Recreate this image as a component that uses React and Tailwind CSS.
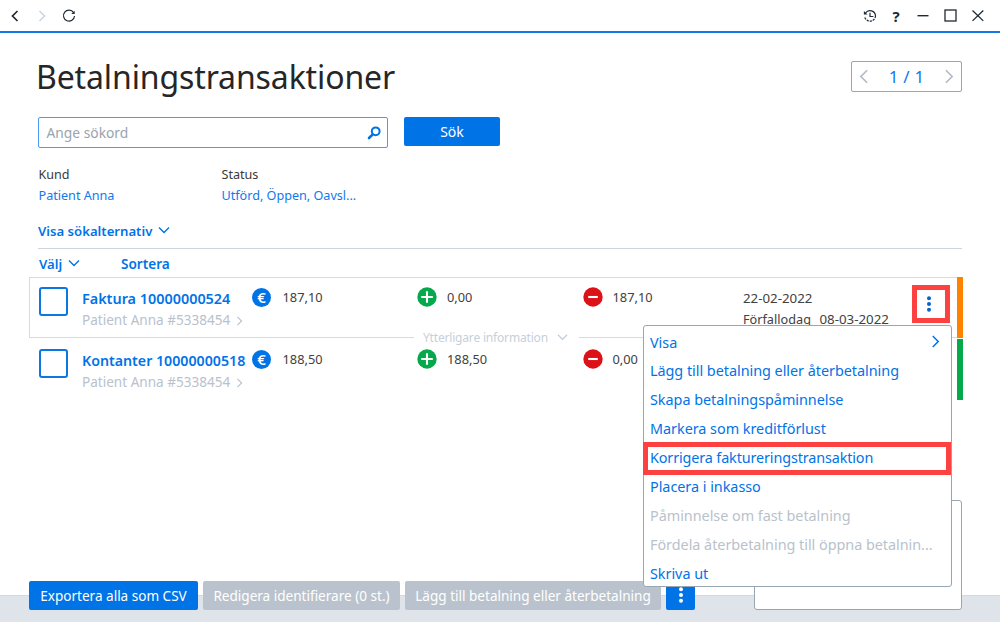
import React from 'react';

function Chevron({ dir = 'down', className = '', width = 1.4 }) {
  const shapes = {
    down: { w: 12, h: 8, d: 'M1 1.5 6 6.5 11 1.5' },
    right: { w: 8, h: 12, d: 'M1.5 1 6.5 6 1.5 11' },
    left: { w: 8, h: 12, d: 'M6.5 1 1.5 6 6.5 11' },
  };
  const s = shapes[dir];
  return (
    <svg viewBox={`0 0 ${s.w} ${s.h}`} className={className} fill="none" stroke="currentColor" strokeWidth={width}>
      <path d={s.d} />
    </svg>
  );
}

function Dots({ className }) {
  return (
    <svg viewBox="0 0 6 18" className={className} fill="currentColor">
      <circle cx="3" cy="3.3" r="2" />
      <circle cx="3" cy="9" r="2" />
      <circle cx="3" cy="14.7" r="2" />
    </svg>
  );
}

function TitleBar() {
  return (
    <header className="flex h-[33px] shrink-0 items-center justify-between border-b-2 border-[#1477e8] pl-[11px] pr-[16px] text-[#1e2a35]">
      <div className="flex items-center">
        <Chevron dir="left" width={1.7} className="h-[12px] w-[8px]" />
        <Chevron dir="right" width={1.5} className="ml-[19px] h-[12px] w-[8px] text-[#c9d6e2]" />
        <svg viewBox="0 0 14 14" className="ml-[16px] size-[14px]" fill="none" stroke="currentColor" strokeWidth="1.2">
          <path d="M11.6 3.6A5.5 5.5 0 1 0 12.5 7" />
          <path d="M12.7 1.7v3.4H9.3z" fill="currentColor" stroke="none" />
        </svg>
      </div>
      <div className="flex items-center">
        <svg viewBox="0 0 14 14" className="size-[14px]" fill="none" stroke="currentColor" strokeWidth="1.2">
          <path d="M2.5 4A5.5 5.5 0 0 1 12.5 7" />
          <path d="M12.5 7A5.5 5.5 0 0 1 1.6 7.6" strokeDasharray="2.2 0.9" />
          <path d="M.9 2v3.6h3.6z" fill="currentColor" stroke="none" />
          <path d="M7 3.8v3.7h3.4" />
        </svg>
        <span className="ml-[14px] w-[10px] text-center text-[15px] font-bold leading-[18px]">?</span>
        <svg viewBox="0 0 12 12" className="ml-[16px] size-[12px]" stroke="currentColor" strokeWidth="1.4">
          <path d="M.5 5.7h11" />
        </svg>
        <svg viewBox="0 0 13 13" className="ml-[15px] size-[13px]" fill="none" stroke="currentColor" strokeWidth="1.3">
          <rect x="1" y="1" width="11" height="11" />
        </svg>
        <svg viewBox="0 0 12 12" className="ml-[15px] size-[12px]" stroke="currentColor" strokeWidth="1.3">
          <path d="M.5.5l10.8 10.4M11.3.5.5 10.9" />
        </svg>
      </div>
    </header>
  );
}

function Badge({ kind }) {
  if (kind === 'euro') {
    return (
      <span className="flex size-[19px] items-center justify-center rounded-full bg-[#0073e6] font-['Open_Sans',sans-serif] text-[15px] font-semibold leading-[19px] text-white">
        €
      </span>
    );
  }
  return (
    <svg viewBox="0 0 20 20" className="size-[20px]" strokeWidth="2.1" stroke="#fff">
      <circle cx="10" cy="10" r="9.7" stroke="none" fill={kind === 'plus' ? '#05a84b' : '#dc1218'} />
      {kind === 'plus' ? <path d="M4.2 10h11.6M10 4.2v11.6" /> : <path d="M5.2 10h9.6" />}
    </svg>
  );
}

function Row({ title, titleClass, total, paid, due, children }) {
  return (
    <div className="flex flex-1">
      <span className="mt-[9px] size-[29px] shrink-0 rounded-[3px] border-2 border-[#0b76e4]" />
      <div className="ml-[14px] w-[170px] shrink-0 whitespace-nowrap pt-[10px]">
        <div className={`font-semibold leading-[21px] text-[#0073e8] ${titleClass}`}>{title}</div>
        <div className="flex items-center text-[13.57px] leading-[22px] text-[#b9c2cb]">
          Patient Anna #5338454
          <Chevron dir="right" className="ml-[6px] mt-[1px] h-[10px] w-[7px]" />
        </div>
      </div>
      <div className="mt-[9px] flex h-[20px] shrink-0 items-center text-[12.8px] text-[#414141]">
        <div className="flex w-[164.5px] items-center gap-[11.5px]">
          <Badge kind="euro" />
          <span className="pt-[2px]">{total}</span>
        </div>
        <div className="flex w-[166px] items-center gap-[10.5px]">
          <Badge kind="plus" />
          <span className="pt-[2px]">{paid}</span>
        </div>
        <div className="flex w-[160.5px] items-center gap-[10px]">
          <Badge kind="minus" />
          <span className="pt-[2px]">{due}</span>
        </div>
      </div>
      {children}
    </div>
  );
}

const menuItems = [
  { label: 'Visa', sub: true },
  { label: 'Lägg till betalning eller återbetalning' },
  { label: 'Skapa betalningspåminnelse' },
  { label: 'Markera som kreditförlust' },
  { label: 'Korrigera faktureringstransaktion', tight: true },
  { label: 'Placera i inkasso' },
  { label: 'Påminnelse om fast betalning', off: true },
  { label: 'Fördela återbetalning till öppna betalnin...', off: true },
  { label: 'Skriva ut' },
];

function ContextMenu() {
  return (
    <div className="absolute left-[643px] top-[325px] h-[262px] w-[309px] rounded-[3px] border border-[#98a5b2] bg-white pl-[6px] pr-[10px] pt-[2px]">
      {menuItems.map((m) => (
        <div
          key={m.label}
          className={`flex h-[28.87px] items-center justify-between whitespace-nowrap text-[14.4px] ${
            m.off ? 'text-[#b9c2cb]' : 'text-[#0073e8]'
          } ${m.tight ? 'tracking-[-0.13px]' : 'tracking-[-0.03px]'}`}
        >
          {m.label}
          {m.sub && <Chevron dir="right" className="-mt-[2px] mr-[1px] h-[13px] w-[9px]" />}
        </div>
      ))}
    </div>
  );
}

function Field({ label, value, className }) {
  return (
    <div className={className}>
      <div className="text-[12.6px] text-[#3a3a3a]">{label}</div>
      <div className="text-[12.65px] tracking-[-0.02px] text-[#1279ec]">{value}</div>
    </div>
  );
}

export default function App() {
  return (
    <div className="relative flex h-[622px] w-[1000px] flex-col overflow-hidden bg-white font-['Noto_Sans',sans-serif]">
      <TitleBar />
      <main className="flex-1 pl-[38px] pr-[38px]">
        <div className="flex h-[84px] justify-between">
          <h1 className="-ml-[2px] pt-[23px] text-[32px] leading-[41px] tracking-[-0.12px] text-[#262626]">Betalningstransaktioner</h1>
          <div className="mt-[28px] flex h-[31px] w-[111px] items-center justify-between rounded-[2px] border border-[#98a5b2] px-[7px] text-[#b3bcc6]">
            <Chevron dir="left" className="-mt-[1px] h-[15px] w-[10px]" />
            <span className="pt-[1px] text-[17px] tracking-[0.2px] text-[#1279ec]">1 / 1</span>
            <Chevron dir="right" className="-mt-[1px] h-[15px] w-[10px]" />
          </div>
        </div>
        <div className="flex h-[47px] items-start gap-[16px]">
          <div className="flex h-[31px] w-[350px] items-center justify-between rounded-[2px] border border-[#4b9bf0] pl-[7.5px] pr-[6px]">
            <span className="pt-[2px] text-[13.8px] text-[#9aa4ae]">Ange sökord</span>
            <svg viewBox="0 0 14 14" className="size-[14px] text-[#0073e6]" fill="none" stroke="currentColor">
              <circle cx="8.7" cy="5.3" r="3.9" strokeWidth="2" />
              <path d="M5.8 8.4 2 12" strokeWidth="2.6" strokeLinecap="round" />
            </svg>
          </div>
          <button className="h-[29px] w-[96px] rounded-[2px] bg-[#0073e6] text-[14px] text-white">Sök</button>
        </div>
        <div className="flex leading-[21px]">
          <Field label="Kund" value="Patient Anna" className="w-[183.5px] pl-[0.5px]" />
          <Field label="Status" value="Utförd, Öppen, Oavsl..." />
        </div>
        <div className="mt-[15px] flex h-[28px] items-start border-b border-[#cfd5db] text-[13.15px] font-semibold leading-[20px] text-[#0073e8]">
          Visa sökalternativ
          <Chevron className="ml-[6px] mt-[5px] h-[8px] w-[12px]" />
        </div>
        <div className="flex h-[28px] pl-[1px] pt-[5px] font-semibold leading-[20px] text-[#0073e8]">
          <div className="flex w-[82px] text-[13.15px]">
            Välj
            <Chevron className="ml-[6px] mt-[5px] h-[8px] w-[12px]" />
          </div>
          <span className="text-[13.6px]">Sortera</span>
        </div>
        <div className="-ml-[9px] flex h-[61px] w-[933.5px]">
          <div className="relative flex flex-1 border border-r-0 border-[#d5dbe1] pl-[9px]">
            <Row title="Faktura 10000000524" titleClass="text-[14.4px]" total="187,10" paid="0,00" due="187,10">
              <div className="pt-[10px] text-[#414141]">
                <div className="text-[13.3px] leading-[20px]">22-02-2022</div>
                <div className="flex whitespace-nowrap leading-[23px]">
                  <span className="w-[76.5px] text-[12.7px]">Förfallodag</span>
                  <span className="text-[13.3px]">08-03-2022</span>
                </div>
              </div>
            </Row>
            <div className="absolute left-[384px] top-[50px] flex h-[18px] w-[165px] items-center bg-white pl-[9px] text-[12px] leading-[18px] tracking-[-0.18px] text-[#c6d0da]">
              <span className="pt-[1px]">Ytterligare information</span>
              <Chevron className="ml-[9px] h-[8px] w-[11px]" />
            </div>
          </div>
          <span className="w-[6px] bg-[#ff8200]" />
        </div>
        <div className="-ml-[9px] mt-[1px] flex h-[61px] w-[933.5px]">
          <div className="flex flex-1 pl-[10px] pt-[1px]">
            <Row title="Kontanter 10000000518" titleClass="text-[14.2px]" total="188,50" paid="188,50" due="0,00" />
          </div>
          <span className="w-[6px] bg-[#05a84b]" />
        </div>
      </main>
      <footer className="flex h-[27px] shrink-0 items-end border-t border-[#d3d9df] bg-[#dfe4ea] pb-[12px] pl-[29px] text-[13.56px]">
        <div className="flex h-[29px] gap-[5px] whitespace-nowrap text-white">
          <button className="w-[169px] rounded-[2px] bg-[#0073e6] pt-[2px]">Exportera alla som CSV</button>
          <button className="w-[197px] rounded-[2px] bg-[#bac3cd] pt-[2px]">Redigera identifierare (0 st.)</button>
          <button className="w-[256px] rounded-[2px] bg-[#bac3cd] pt-[2px]">Lägg till betalning eller återbetalning</button>
          <button className="flex w-[29px] items-center justify-center rounded-[2px] bg-[#0073e6]">
            <Dots className="-mt-[1px] h-[18px] w-[6px]" />
          </button>
        </div>
        <div className="ml-[59px] h-[110px] w-[208px] shrink-0 rounded-[3px] border border-[#98a5b2] bg-white" />
      </footer>
      <ContextMenu />
      <div className="absolute left-[643px] top-[442px] h-[33px] w-[308px] border-5 border-[#fd4141]" />
      <div className="absolute left-[912px] top-[285px] flex size-[38px] items-center justify-center border-5 border-[#fd4141] bg-white">
        <Dots className="ml-[-4px] h-[18px] w-[6px] text-[#0b62c4]" />
      </div>
    </div>
  );
}
